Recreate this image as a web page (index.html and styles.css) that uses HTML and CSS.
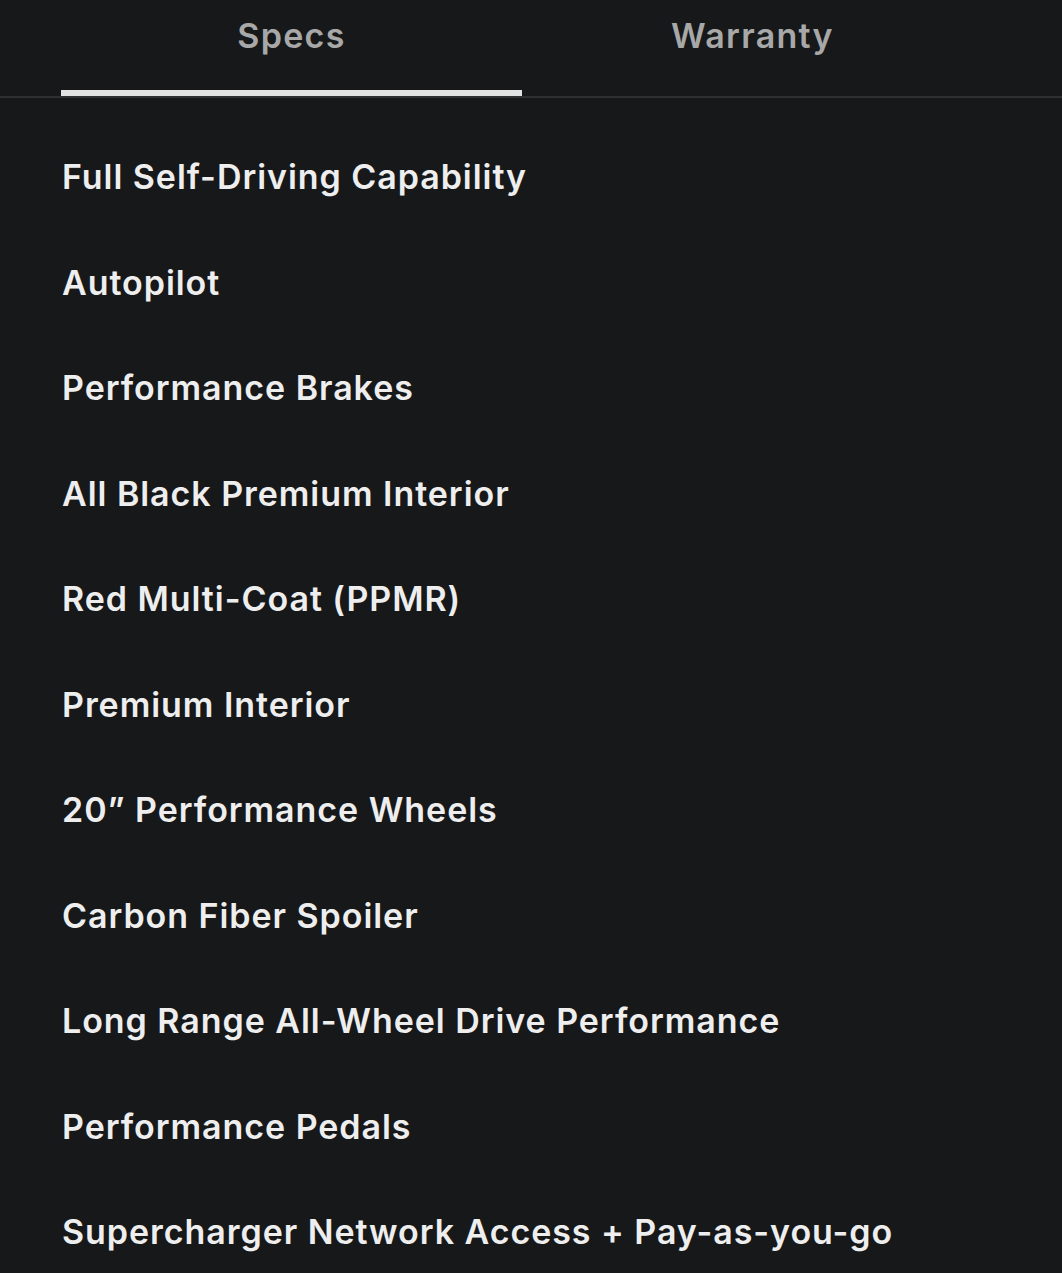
FILE: index.html
```html
<!DOCTYPE html>
<html>
<head>
<meta charset="utf-8">
<link rel="stylesheet" href="styles.css">
</head>
<body>
<div class="tabs">
  <div class="tab active">Specs</div>
  <div class="tab">Warranty</div>
</div>
<ul class="specs">
  <li>Full Self-Driving Capability</li>
  <li>Autopilot</li>
  <li>Performance Brakes</li>
  <li>All Black Premium Interior</li>
  <li>Red Multi-Coat (PPMR)</li>
  <li>Premium Interior</li>
  <li>20” Performance Wheels</li>
  <li>Carbon Fiber Spoiler</li>
  <li>Long Range All-Wheel Drive Performance</li>
  <li>Performance Pedals</li>
  <li>Supercharger Network Access + Pay-as-you-go</li>
</ul>
</body>
</html>
```
FILE: styles.css
```css
html, body {
  margin: 0;
  padding: 0;
  background: #17181a;
}
body {
  font-family: Inter, "Noto Sans", sans-serif;
  color: #eeeeee;
  overflow: hidden;
}
.tabs {
  display: flex;
  padding-left: 61px;
  border-bottom: 2px solid #2e2f31;
  height: 96px;
}
.tab {
  width: 461px;
  text-align: center;
  font-size: 34px;
  font-weight: 600;
  letter-spacing: 1.3px;
  color: #a8a8a8;
  padding-top: 14px;
  line-height: 44px;
  box-sizing: border-box;
}
.tab.active {
  border-bottom: 6px solid #e2e2e2;
}
.specs {
  list-style: none;
  margin: 0;
  padding: 57px 0 0 62px;
}
.specs li {
  font-size: 34px;
  font-weight: 600;
  letter-spacing: 0.95px;
  line-height: 44px;
  height: 105.5px;
}
```
